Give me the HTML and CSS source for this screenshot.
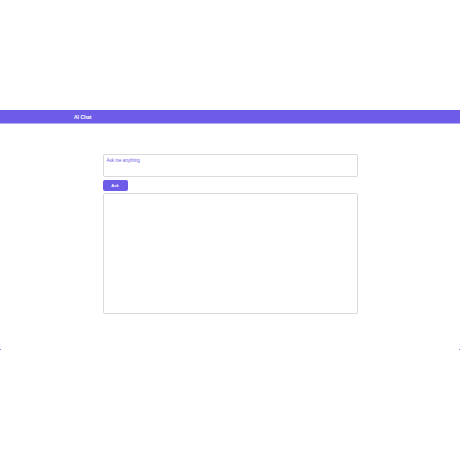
FILE: index.html
```html
<!DOCTYPE html>
<html>
<head>
<meta charset="utf-8">
<link rel="stylesheet" href="styles.css">
</head>
<body>
<div class="page">
  <header class="bar"><span class="title">AI Chat</span></header>
  <main class="chat">
    <textarea class="input" placeholder="Ask me anything"></textarea>
    <button class="ask">Ask</button>
    <div class="output"></div>
  </main>
  <div class="edges"><span class="dot"></span><span class="dot"></span></div>
</div>
</body>
</html>
```

FILE: styles.css
```css
html, body { margin: 0; padding: 0; background: #fff; }
body { font-family: "Liberation Sans", Arial, sans-serif; width: 460px; height: 460px; overflow: hidden; }
.page { padding-top: 110px; }
.bar {
  height: 13px;
  background: #6c5ce7;
  box-shadow: 0 1px 0 #b3a9f3;
  display: flex;
  align-items: center;
  padding-left: 74px;
}
.title { color: #fff; font-size: 5px; font-weight: bold; }
.chat {
  width: 255px;
  margin: 31px auto 0;
  display: flex;
  flex-direction: column;
  align-items: flex-start;
}
.input {
  box-sizing: border-box;
  width: 255px;
  height: 23px;
  border: 1px solid #dadada;
  border-radius: 2px;
  padding: 3px 3px;
  font-family: "Liberation Sans", Arial, sans-serif;
  font-size: 4.5px;
  resize: none;
  margin: 0;
}
.input::placeholder { color: #6c5ce7; }
.ask {
  margin-top: 3px;
  width: 25px;
  height: 10.5px;
  border: none;
  border-radius: 2px;
  background: #6c5ce7;
  color: #fff;
  font-size: 4px;
  font-weight: bold;
  font-family: "Liberation Sans", Arial, sans-serif;
  padding: 0;
}
.output {
  box-sizing: border-box;
  margin-top: 2.5px;
  width: 255px;
  height: 121px;
  border: 1px solid #dadada;
  border-radius: 2px;
  background: #fff;
}
.edges {
  margin-top: 35px;
  display: flex;
  justify-content: space-between;
}
.dot { width: 1px; height: 1px; background: #8a7ff0; }
```
